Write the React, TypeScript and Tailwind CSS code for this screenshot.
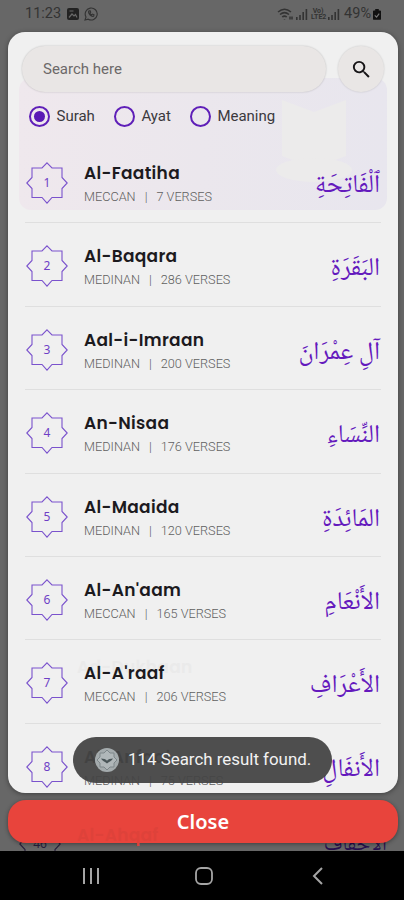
import React, { useState } from 'react';

interface Surah {
  id: number;
  name: string;
  place: string;
  verses: number;
  arabic: string;
}

const SURAHS: Surah[] = [
  { id: 1, name: 'Al-Faatiha', place: 'MECCAN', verses: 7, arabic: 'ٱلْفَاتِحَةِ' },
  { id: 2, name: 'Al-Baqara', place: 'MEDINAN', verses: 286, arabic: 'البَقَرَةِ' },
  { id: 3, name: 'Aal-i-Imraan', place: 'MEDINAN', verses: 200, arabic: 'آلِ عِمْرَانَ' },
  { id: 4, name: 'An-Nisaa', place: 'MEDINAN', verses: 176, arabic: 'النِّسَاءِ' },
  { id: 5, name: 'Al-Maaida', place: 'MEDINAN', verses: 120, arabic: 'المَائِدَةِ' },
  { id: 6, name: "Al-An'aam", place: 'MECCAN', verses: 165, arabic: 'الأَنْعَامِ' },
  { id: 7, name: "Al-A'raaf", place: 'MECCAN', verses: 206, arabic: 'الأَعْرَافِ' },
  { id: 8, name: 'Al-Anfaal', place: 'MEDINAN', verses: 75, arabic: 'الأَنفَالِ' },
];

const MODES = ['Surah', 'Ayat', 'Meaning'];

const Star: React.FC<{ n: number; dark?: boolean }> = ({ n, dark }) => (
  <div className="relative flex h-[42px] w-[42px] shrink-0 items-center justify-center">
    <svg className="absolute inset-0" width="42" height="42" viewBox="0 0 42 42" fill="none" stroke={dark ? '#28203c' : '#7a52cd'} strokeWidth="1.1">
      <path d="M21 .8 26 6H36V15.5L41.2 21 36 26.5V35.5H26L21 41.2 16 35.5H6V26.5L.8 21 6 15.5V6H16Z" />
    </svg>
    <span className={`font-['Noto_Sans',sans-serif] text-[12px] leading-none ${dark ? 'text-[#28203c]' : 'text-[#6e3fc6]'}`}>{n}</span>
  </div>
);

const SurahRow: React.FC<{ surah: Surah }> = ({ surah }) => (
  <div className="flex h-[83.4px] shrink-0 items-start border-b-[1.5px] border-[#dfdfdf]">
    <div className="pt-[22px] pl-[1px]"><Star n={surah.id} /></div>
    <div className="ml-4 pt-[21px]">
      <div className="font-['Poppins','Inter',sans-serif] text-[17px] leading-[24px] font-semibold tracking-[0.3px] whitespace-nowrap text-[#1c1a1e]">
        {surah.name}
      </div>
      <div className="mt-[4px] text-[12.7px] leading-[16px] font-light whitespace-nowrap text-[#5f5f5f]">
        {surah.place}<span className="mx-[9px]">|</span>{surah.verses} VERSES
      </div>
    </div>
    <div
      dir="rtl"
      className="mt-[29px] mr-[1px] ml-auto font-['Noto_Naskh_Arabic','Scheherazade_New','Amiri','DejaVu_Sans',serif] text-[25.5px] leading-[36px] whitespace-nowrap text-[#6419bd]"
    >
      {surah.arabic}
    </div>
  </div>
);

const Signal: React.FC = () => (
  <svg width="12" height="12" viewBox="0 0 12 12" fill="#333">
    <path d="M0 9h1.6v3H0zM3.2 7h1.6v5H3.2zM6.4 4H8v8H6.4zM9.6 1h1.6v11H9.6z" />
  </svg>
);

const StatusBar: React.FC = () => (
  <div className="flex h-[28px] shrink-0 items-center pr-[23px] pl-[25px] text-[14.5px] text-[#333]">
    <span>11:23</span>
    <svg className="ml-[6px]" width="12" height="12" viewBox="0 0 12 12">
      <rect width="12" height="12" rx="2" fill="#222" />
      <path d="M2 9.5 5 6l2 2 1.5-1.5L10 9.5M2.5 3h4" stroke="#686868" strokeWidth="1.2" fill="none" />
    </svg>
    <svg className="ml-[5px]" width="14" height="14" viewBox="0 0 14 14" fill="none" stroke="#333" strokeWidth="1.1">
      <path d="M1 13 2 10A6 6 0 1 1 4.2 12.2Z" />
      <path d="M4.6 4.2c-.7 2.5 2.5 5.7 5 5.1l.4-1.5-1.6-.7-.8.8C6.6 7.4 6.1 6.7 5.9 6l.8-.8-.7-1.5Z" />
    </svg>
    <svg className="ml-auto" width="17" height="13" viewBox="0 0 17 13" fill="none" stroke="#333" strokeWidth="1.5">
      <path d="M1 4c4-3.500 9-3.500 13 0M3 6.500c3-2.500 6-2.500 9 0M5.200 9c1.500-1.200 3-1.200 4.600 0M7.500 11.500v.5M13 8.500v3M15 8.500v3" />
    </svg>
    <span className="ml-[2px]"><Signal /></span>
    <span className="ml-[3px] w-[14px] text-center text-[7px] leading-[6px] font-bold">Vo) LTE2</span>
    <span className="ml-[3px]"><Signal /></span>
    <span className="ml-[4px]">49%</span>
    <svg className="ml-[2px]" width="8" height="12" viewBox="0 0 9 13">
      <path d="M2.5 1h4v1.5H8a1 1 0 0 1 1 1V12a1 1 0 0 1-1 1H1a1 1 0 0 1-1-1V3.5a1 1 0 0 1 1-1h1.5Z" fill="#111" />
      <path d="m2 8 2 2 3-4" stroke="#777" strokeWidth="1.3" fill="none" />
    </svg>
  </div>
);

const App: React.FC = () => {
  const [query, setQuery] = useState('');
  const [mode, setMode] = useState('Surah');

  return (
    <div className="relative flex h-[900px] w-[404px] flex-col overflow-hidden bg-[#676767] font-['Roboto',sans-serif]">
      <StatusBar />

      {/* search dialog */}
      <div className="relative mt-[4px] ml-[8px] flex h-[761px] w-[390px] shrink-0 flex-col overflow-hidden rounded-[17px] bg-[#f0f0f0] shadow-[0_1px_5px_rgba(0,0,0,0.4)]">
        {/* banner of the page showing through */}
        <div className="absolute top-[46px] left-[11px] h-[132px] w-[368px] rounded-[12px] bg-gradient-to-r from-[#efe8ed] via-[#ebe7ed] to-[#e8e6ee]">
          <svg className="absolute top-[14px] right-[35px]" width="76" height="92" viewBox="0 0 76 92" fill="#ecebeb">
            <path d="M6 8 38 20 70 8V64L38 76 6 64Z" />
            <ellipse cx="38" cy="78" rx="38" ry="12" />
          </svg>
        </div>
        <span className="absolute top-[623px] left-[69px] font-['Poppins','Inter',sans-serif] text-[17px] leading-[24px] font-semibold tracking-[0.3px] text-[#eaeaea]">Ad-Dukhaan</span>

        <div className="relative flex shrink-0 items-center pt-[14px] pr-[14px] pl-[14px]">
          <input
            type="text"
            placeholder="Search here"
            value={query}
            onChange={(e) => setQuery(e.target.value)}
            className="h-[46px] w-[304px] rounded-full bg-[#e9e6e5] px-[21px] text-[15px] text-[#555] shadow-[0_0_2px_rgba(0,0,0,0.22)] outline-none placeholder:text-[#6c6969]"
          />
          <button className="ml-[12px] flex h-[46px] w-[46px] items-center justify-center rounded-full bg-[#e9e6e5] shadow-[0_0_2px_rgba(0,0,0,0.18)]">
            <svg width="23" height="23" viewBox="0 0 24 24" fill="#171517">
              <path d="M15.5 14h-.79l-.28-.27A6.471 6.471 0 0 0 16 9.5 6.5 6.5 0 1 0 9.5 16c1.61 0 3.09-.59 4.23-1.57l.27.28v.79l5 4.99L20.49 19l-4.99-5zm-6 0C7.01 14 5 11.99 5 9.5S7.01 5 9.5 5 14 7.01 14 9.5 11.99 14 9.5 14z" />
            </svg>
          </button>
        </div>

        <div className="relative flex h-[48px] shrink-0 items-center pl-[21px]">
          {MODES.map((m) => (
            <button key={m} onClick={() => setMode(m)} className="mr-[19px] flex items-center text-[15px] text-[#3b393d]">
              <span className="mr-[6.5px] flex h-[21px] w-[21px] items-center justify-center rounded-full border-[2px] border-[#5f1fb8]">
                {mode === m && <span className="h-[11px] w-[11px] rounded-full bg-[#5a19b5]" />}
              </span>
              {m}
            </button>
          ))}
        </div>

        <div className="relative ml-[17px] flex w-[356px] shrink-0 flex-col">
          {SURAHS.map((s) => <SurahRow key={s.id} surah={s} />)}
        </div>
      </div>

      {/* list entry of the page below the dialog */}
      <div className="absolute top-[811px] left-[19px] flex h-[40px] w-[368px] items-start overflow-hidden">
        <div className="pt-[12px]"><Star n={46} dark /></div>
        <div dir="rtl" className="ml-auto pt-[19px] font-['Noto_Naskh_Arabic','Scheherazade_New','Amiri','DejaVu_Sans',serif] text-[22px] leading-[30px] text-[#28104f]">الأحقاف</div>
      </div>

      <button className="relative mt-[7px] ml-[8px] h-[43px] w-[390px] shrink-0 rounded-[18px] bg-[#e8443c] font-['Noto_Sans',sans-serif] text-[20px] leading-[43px] font-semibold text-white shadow-[0_1px_4px_rgba(0,0,0,0.4)]">
        <span className="absolute top-[23px] left-[69px] font-['Poppins','Inter',sans-serif] text-[17px] leading-[24px] font-semibold tracking-[0.3px] text-[#de423a]">Al-Ahqaf</span>
        <span className="relative">Close</span>
      </button>

      {/* android navigation */}
      <nav className="relative mt-auto flex h-[49px] shrink-0 items-center bg-black">
        <svg className="ml-[82px]" width="18" height="18" viewBox="0 0 18 18" stroke="#a5a5a5" strokeWidth="2">
          <path d="M2 1v16M9 1v16M16 1v16" />
        </svg>
        <svg className="ml-[95px]" width="18" height="18" viewBox="0 0 18 18" fill="none" stroke="#a5a5a5" strokeWidth="1.8">
          <rect x="1" y="1" width="16" height="16" rx="5" />
        </svg>
        <svg className="ml-[99px]" width="12" height="18" viewBox="0 0 12 18" fill="none" stroke="#a5a5a5" strokeWidth="2">
          <path d="M10 1 2 9l8 8" />
        </svg>
      </nav>

      {/* toast */}
      <div className="absolute top-[737px] left-[73px] flex h-[46px] w-[259px] items-center rounded-full bg-[#454545]/95 pl-[22px] text-[16.9px] whitespace-nowrap text-[#f2f2f2]">
        <svg className="mr-[9px]" width="24" height="24" viewBox="0 0 24 24" fill="none">
          <circle cx="12" cy="12" r="12" fill="#a4abad" />
          <path d="m12 2 3 3h4v4l3 3-3 3v4h-4l-3 3-3-3H5v-4l-3-3 3-3V5h4Z" stroke="#7e878a" fill="#b0b7b9" />
          <path d="M6 10.5c2.5 0 5 .8 6 2.3 1-1.5 3.5-2.3 6-2.3-1 2.5-4 3-6 5-2-2-5-2.5-6-5Z" fill="#4a5558" />
        </svg>
        114 Search result found.
      </div>
    </div>
  );
};

export default App;
